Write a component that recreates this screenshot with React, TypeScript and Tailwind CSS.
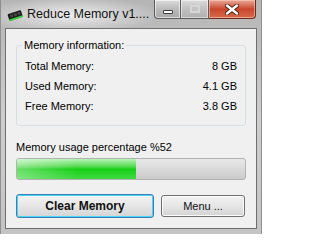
import React from 'react';

const font = { fontFamily: '"Liberation Sans", Arial, sans-serif' };

function RamIcon() {
  return (
    <svg width="16" height="12" viewBox="0 0 16 12">
      <g transform="rotate(-18 8 6)">
        <rect x="1" y="3" width="14" height="7" rx="1" fill="#1a1a1a" />
        <rect x="1" y="8.5" width="14" height="1.8" fill="#3fcf3f" />
        <rect x="3" y="4.3" width="3" height="3" fill="#444" />
        <rect x="7" y="4.3" width="3" height="3" fill="#444" />
        <rect x="11" y="4.3" width="2.5" height="3" fill="#444" />
      </g>
    </svg>
  );
}

function CaptionButtons() {
  return (
    <div className="ml-auto mr-[5px] flex h-[19px] self-start">
      <div className="flex w-[27px] items-center justify-center rounded-bl-[4px] border border-t-0 border-[#5c5c5c] bg-gradient-to-b from-[#dcdcdc] via-[#bababa] to-[#a8a8a8] shadow-[inset_0_0_0_1px_rgba(255,255,255,0.6)]">
        <div className="mt-[5px] h-[4px] w-[10px] rounded-[1px] border border-[#3a3a3a] bg-white" />
      </div>
      <div className="flex w-[28px] items-center justify-center border border-l-0 border-t-0 border-[#5c5c5c] bg-gradient-to-b from-[#dcdcdc] via-[#c0c0c0] to-[#b0b0b0] shadow-[inset_0_0_0_1px_rgba(255,255,255,0.5)]">
        <div className="h-[8px] w-[10px] border-2 border-[#d6d6d6] bg-[#c4c4c4]" />
      </div>
      <div className="flex w-[47px] items-center justify-center rounded-br-[4px] border border-l-0 border-t-0 border-[#6a2a1e] bg-gradient-to-b from-[#e8a898] via-[#c9452c] to-[#d66a4c] shadow-[inset_0_0_0_1px_rgba(255,220,200,0.5)]">
        <svg width="14" height="11" viewBox="0 0 14 11">
          <path d="M2 1.5 L12 9.5 M12 1.5 L2 9.5" stroke="#4a2018" strokeWidth="4.2" strokeLinecap="round" />
          <path d="M2 1.5 L12 9.5 M12 1.5 L2 9.5" stroke="#ffffff" strokeWidth="2.4" strokeLinecap="round" />
        </svg>
      </div>
    </div>
  );
}

function Row({ label, value }: { label: string; value: string }) {
  return (
    <div className="flex h-[20px] items-center justify-between">
      <span>{label}</span>
      <span>{value}</span>
    </div>
  );
}

export default function App() {
  const used = 52;
  return (
    <div
      style={font}
      className="flex h-[234px] w-[262px] flex-col overflow-hidden border-x border-[#8f8f8f] bg-gradient-to-b from-[#b5b5b5] via-[#cdcdcd] to-[#c4c4c4] text-[11px] text-black"
    >
      {/* title bar */}
      <div className="flex h-[28px] shrink-0 items-center bg-[radial-gradient(ellipse_90px_18px_at_70px_15px,rgba(255,255,255,0.75),transparent)]">
        <div className="ml-[6px] mt-[1px]">
          <RamIcon />
        </div>
        <span className="ml-[4px] mt-[1px] text-[12.5px] text-[#111]">Reduce Memory v1....</span>
        <CaptionButtons />
      </div>

      {/* client */}
      <div className="mx-[4px] mb-[5px] flex flex-1 flex-col border border-[#6f6f6f] bg-[#f0f0f0] px-[10px] pt-[10px]">
        <fieldset className="rounded-[3px] border border-[#d5dfe5] px-[8px] pb-[9px] pt-[4px]">
          <legend className="ml-[-3px] px-[2px] leading-[13px]">Memory information:</legend>
          <Row label="Total Memory:" value="8 GB" />
          <Row label="Used Memory:" value="4.1 GB" />
          <Row label="Free Memory:" value="3.8 GB" />
        </fieldset>

        <div className="mt-[15px] leading-[13px]">Memory usage percentage %{used}</div>

        <div className="mt-[4px] h-[22px] overflow-hidden rounded-[3px] border border-[#b2b2b2] bg-gradient-to-b from-[#e8e8e8] via-[#dadada] to-[#cbcbcb]">
          <div
            className="h-full bg-gradient-to-b from-[#b4f5b4] via-[#11d011] to-[#3fd93f]"
            style={{ width: `${used}%` }}
          >
            <div className="h-full w-full bg-gradient-to-r from-[rgba(255,255,255,0.35)] via-transparent to-transparent" />
          </div>
        </div>

        <div className="mt-[14px] flex gap-[7px]">
          <button className="h-[24px] w-[138px] rounded-[3px] border border-[#3c7fb1] bg-gradient-to-b from-[#f4f4f4] via-[#e6e6e6] to-[#d4d4d4] text-[12px] font-bold text-[#111] shadow-[inset_0_0_0_1px_#48d4f8]">
            Clear Memory
          </button>
          <button className="mt-[1px] h-[22px] w-[84px] rounded-[3px] border border-[#707070] bg-gradient-to-b from-[#f2f2f2] via-[#e6e6e6] to-[#d3d3d3] text-[11px] text-[#111] shadow-[inset_0_0_0_1px_#fcfcfc]">
            Menu ...
          </button>
        </div>
      </div>
    </div>
  );
}
